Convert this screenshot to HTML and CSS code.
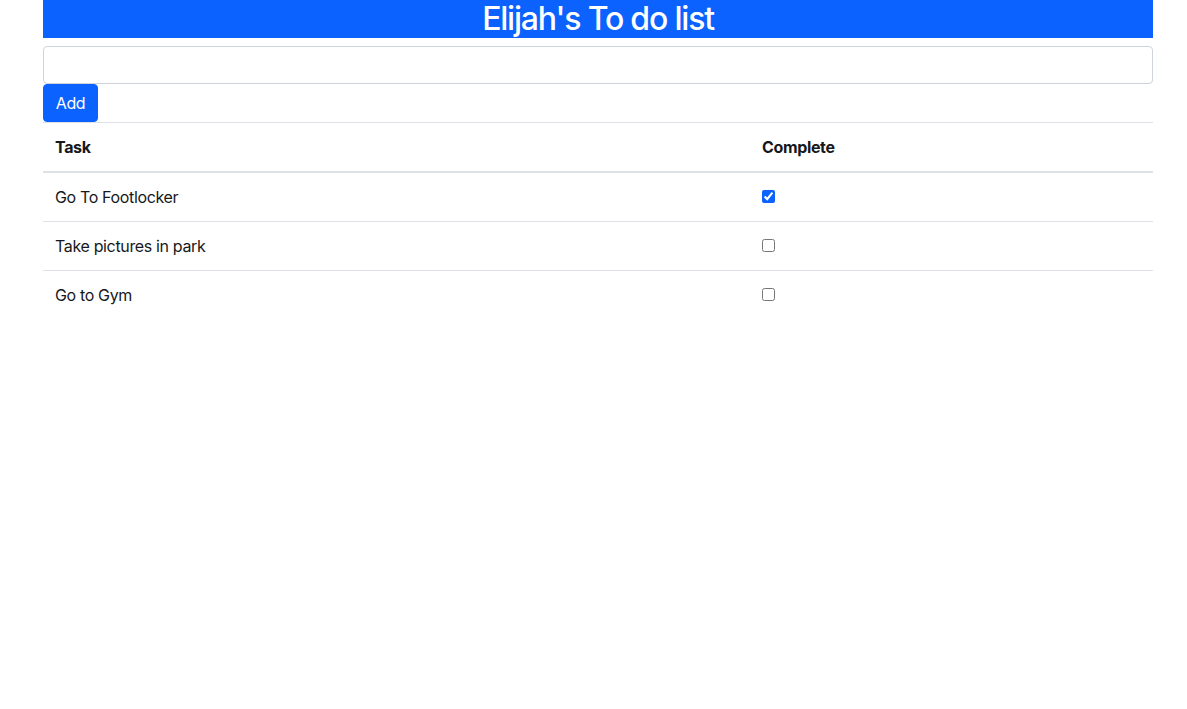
FILE: index.html
```html
<!DOCTYPE html>
<html lang="en">
<head>
<meta charset="utf-8">
<title>Elijah's To do list</title>
<link rel="stylesheet" href="styles.css">
</head>
<body>
<div class="container">
  <h2 class="title">Elijah's To do list</h2>
  <input class="task-input" type="text">
  <button class="btn-add" type="button">Add</button>
  <table class="tasks">
    <thead>
      <tr><th class="col-task">Task</th><th>Complete</th></tr>
    </thead>
    <tbody>
      <tr><td>Go To Footlocker</td><td><input class="check" type="checkbox" checked></td></tr>
      <tr><td>Take pictures in park</td><td><input class="check" type="checkbox"></td></tr>
      <tr><td>Go to Gym</td><td><input class="check" type="checkbox"></td></tr>
    </tbody>
  </table>
</div>
</body>
</html>
```
FILE: styles.css
```css
* { box-sizing: border-box; }
body {
  margin: 0;
  font-family: Inter, "Liberation Sans", sans-serif;
  font-size: 16px;
  line-height: 1.5;
  letter-spacing: -0.35px;
  color: #16181b;
  background: #fff;
}
.container {
  width: 1110px;
  margin-left: 43px;
}
.title {
  margin: 0 0 8px;
  background: #0b62fe;
  color: #fff;
  text-align: center;
  font-size: 32px;
  font-weight: 500;
  line-height: 1.2;
  letter-spacing: -1.2px;
  height: 38px;
}
.task-input {
  display: block;
  width: 100%;
  height: 38px;
  padding: 6px 12px;
  border: 1px solid #ced4da;
  border-radius: 4px;
  font: inherit;
  background: #fff;
}
.btn-add {
  display: block;
  height: 38px;
  width: 55px;
  padding: 6px 0;
  border: 1px solid #0b62fe;
  border-radius: 4px;
  background: #0b62fe;
  color: #fff;
  font: inherit;
  letter-spacing: -0.35px;
  line-height: 24px;
  text-align: center;
}
.tasks {
  width: 100%;
  border-collapse: collapse;
}
.tasks th, .tasks td {
  padding: 12px;
  text-align: left;
  vertical-align: top;
  border-top: 1px solid #dee2e6;
  line-height: 24px;
}
.tasks th {
  font-weight: 700;
  border-bottom: 2px solid #dee2e6;
}
.col-task { width: 707px; }
.check {
  width: 13px;
  height: 13px;
  margin: 5px 0 0;
  accent-color: #0b62fe;
  vertical-align: top;
}
```
